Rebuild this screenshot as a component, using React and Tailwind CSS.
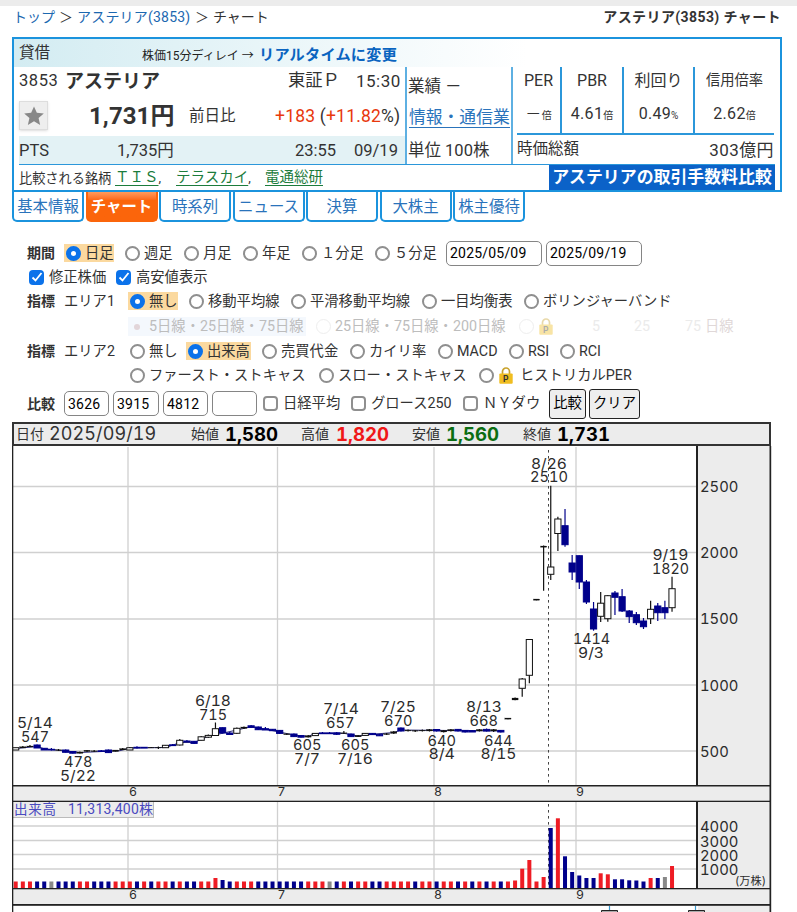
import React from "react";
import clsx from "clsx";

const TABS = ["基本情報", "チャート", "時系列", "ニュース", "決算", "大株主", "株主優待"];

/* ---- chart data: [index, top, bottom, high, low, type] ----
   w = up candle, b = down candle, k = flat */
const CANDLES = [
  [0, 747.7, 750, 747.7, 750, "w"], [1, 746.7, 748, 746, 748, "k"], [2, 746, 747, 745, 747, "k"],
  [3, 745, 748, 744.5, 748, "b"], [4, 748.3, 750, 748, 750, "b"], [5, 749.3, 750, 748, 750.5, "b"],
  [6, 749.7, 750.4, 749, 751, "k"], [7, 750, 752.3, 749.5, 752.5, "b"], [8, 751.5, 753.2, 751, 753.4, "b"],
  [9, 752, 753.4, 751.5, 753.5, "k"], [10, 750.2, 751.5, 750, 752, "k"], [11, 750.8, 751.5, 750, 752, "k"],
  [12, 750.8, 751.5, 750, 752, "b"], [13, 750, 752.6, 749.5, 753, "b"], [14, 750, 751.5, 750, 751.5, "k"],
  [15, 748.5, 750, 748, 750, "k"], [16, 747.7, 750, 747, 750, "w"], [17, 747.3, 748, 746.3, 748.5, "b"],
  [18, 747.3, 748, 747, 748, "b"], [19, 747.3, 748, 747, 748, "k"], [20, 747.3, 748, 746.5, 749, "k"],
  [21, 745.3, 747.7, 745, 747.7, "w"], [22, 744.8, 745.6, 744, 746, "b"], [23, 740.3, 745, 739, 745.5, "w"],
  [24, 741, 741.8, 740, 742, "b"], [25, 741.3, 743.4, 741, 744, "b"], [26, 736.8, 740.3, 736, 740.5, "w"],
  [27, 735.4, 737.2, 734.5, 738, "w"], [28, 728.7, 735.5, 722.5, 736, "w"], [29, 727.7, 733, 727.5, 733.5, "b"],
  [30, 733, 734.5, 732, 735, "b"], [31, 728.3, 733.3, 727.5, 734, "w"], [32, 727, 728.4, 726.5, 729, "k"],
  [33, 725.8, 727.4, 725, 728, "b"], [34, 727, 729.7, 726.5, 730, "b"], [35, 728.7, 730, 727, 730, "b"],
  [36, 729.3, 730.7, 729, 731, "b"], [37, 730.4, 733.4, 730, 734, "b"], [38, 733.7, 734.7, 733.5, 735, "k"],
  [39, 734, 736.6, 733.5, 737, "b"], [40, 735.6, 737.2, 735, 737.5, "b"], [41, 735.6, 737.2, 735, 737.5, "k"],
  [42, 733.4, 735.6, 733, 736, "w"], [43, 732.9, 733.7, 732, 734, "b"], [44, 732.9, 733.7, 732, 734, "b"],
  [45, 732.8, 734.3, 732, 735, "b"], [46, 732.8, 733.6, 731, 734, "k"], [47, 734, 736.6, 733.5, 737, "b"],
  [48, 735.4, 736.9, 735, 737, "k"], [49, 733.4, 735.4, 733, 736, "w"], [50, 733.4, 734.6, 733, 735, "b"],
  [51, 734.3, 735.8, 734, 736, "b"], [52, 733.7, 734.6, 733, 735, "k"], [53, 731.6, 733.4, 731, 734, "k"],
  [54, 728, 731, 727.5, 731.5, "b"], [55, 730.2, 731, 729.5, 731.5, "k"], [56, 730.4, 731.2, 730, 732, "k"],
  [57, 730.2, 731, 729.5, 731.5, "k"], [58, 729.4, 731, 729, 731.5, "k"], [59, 729.5, 731, 729, 731.5, "b"],
  [60, 730.4, 732, 730, 732.5, "k"], [61, 729.4, 731, 729, 731.5, "k"], [62, 729.4, 731, 729, 731.5, "b"],
  [63, 730.4, 732, 730, 732.5, "b"], [64, 730.6, 732, 730, 732, "b"], [65, 729.4, 731, 729, 731.5, "k"],
  [66, 729.4, 731, 728.5, 731.5, "b"], [67, 729.4, 731, 729, 732, "k"], [68, 730.4, 732, 730, 732.5, "b"],
  [69, 718, 719.2, 718, 719.2, "k"], [70, 698, 700, 697.5, 700.3, "k"], [71, 679, 688.3, 678, 696.7, "w"],
  [72, 639.5, 675.3, 639, 683.3, "w"], [73, 599, 600.3, 599, 600.3, "k"], [74, 546, 547.3, 545.5, 590.7, "k"],
  [75, 567, 574.3, 485.7, 580, "w"], [76, 519, 533.5, 516.7, 551, "w"], [77, 525.7, 544.7, 509, 546.7, "b"],
  [78, 563, 572, 555, 580, "b"], [79, 555.7, 582, 555.5, 589, "b"], [80, 582, 602, 580, 604, "b"],
  [81, 609, 629, 602, 630.7, "b"], [82, 603.2, 616.3, 592, 622, "w"], [83, 595.7, 618.7, 595, 621.7, "w"],
  [84, 593, 597.3, 591, 615, "b"], [85, 596.7, 611, 589, 612, "b"], [86, 611, 616.7, 610, 623, "b"],
  [87, 614.7, 622.7, 612, 625, "b"], [88, 621, 626.7, 618, 629, "b"], [89, 609.3, 618.7, 600.7, 624, "w"],
  [90, 606, 612.7, 603, 621, "b"], [91, 607.7, 612.7, 600.7, 619, "b"], [92, 588.7, 607.7, 576.7, 611.7, "w"],
];

const VOLUME_COLORS =
  "RRRBBGBBBRRBBBRRRBRBRRBRBBRRRBBRRRBBBBBBBRRRGBRBRRBBRRRRBRRBRRBRBRBRBRRRRRRBRBBBBBRRBBBBBRBGR";
const VOLUME_TOPS = {
  28: 878, 29: 880, 70: 880.5, 71: 868.7, 72: 860, 74: 877, 75: 828, 76: 818.3, 77: 856.3,
  78: 872, 79: 875.5, 80: 878, 81: 878, 82: 873.3, 83: 874.3, 84: 879.3, 85: 879.3, 86: 880.3,
  87: 880.5, 88: 881.5, 89: 878, 90: 878, 91: 877, 92: 866,
};
const VOLUME_FILL = { R: "#ee1c24", B: "#00008b", G: "#888888" };

// [text, x, baseline, width]
const LABELS = [
  ["5/14", 17, 728, 36], ["547", 21, 742, 28], ["478", 64, 767, 28.5], ["5/22", 60, 780.5, 36],
  ["6/18", 195, 706, 36], ["715", 199, 719.5, 28], ["605", 293, 750, 28.5], ["7/7", 294, 764, 26],
  ["7/14", 323, 714, 36], ["657", 326, 727.5, 28.5], ["605", 341, 750, 28.5], ["7/16", 337, 764, 36],
  ["7/25", 380, 711.5, 36], ["670", 384, 725.5, 28.5], ["640", 427.5, 745.5, 28.5], ["8/4", 428.5, 759, 26.5],
  ["8/13", 466, 711.5, 36], ["668", 469.5, 725.5, 28.5], ["644", 484, 745.5, 28.5], ["8/15", 480.5, 759, 36],
  ["8/26", 531, 468.5, 36], ["2510", 530, 482, 38], ["1414", 573, 644, 37], ["9/3", 578, 658, 26],
  ["9/19", 652.5, 560, 36], ["1820", 652, 573.5, 37],
];

const xOf = (i) => 15.7 + i * 7.134;

function Candle({ data }) {
  const [i, top, bottom, high, low, type] = data;
  const x = xOf(i);
  const color = type === "b" ? "#00008b" : "#111111";
  return (
    <g>
      <line x1={x} x2={x} y1={high} y2={low} stroke={color} strokeWidth="1.2" />
      <rect
        x={x - 3.1}
        y={top}
        width={6.2}
        height={bottom - top}
        fill={type === "w" ? "#fff" : color}
        stroke={color}
        strokeWidth={type === "k" ? 0.2 : 1}
      />
    </g>
  );
}

function ChartText({ x, y, w, size = 14.8, children }) {
  return (
    <text x={x} y={y} fontSize={size} textLength={w} lengthAdjust="spacingAndGlyphs" fill="#2b2b2b">
      {children}
    </text>
  );
}

function Chart() {
  return (
    <svg
      viewBox="0 446 797 466"
      className="block h-[466px] w-[797px] shrink-0 font-[Inter,'Noto_Sans_CJK_JP',sans-serif] tabular-nums"
    >
      {/* panels */}
      <rect x="698" y="446" width="72" height="466" fill="#ececec" />
      <rect x="13" y="786" width="757" height="15" fill="#ececec" />
      <rect x="13" y="889" width="757" height="15" fill="#ececec" />

      {/* grid */}
      <g stroke="#d0d0d0" strokeWidth="1.3">
        {[486.5, 552.5, 619, 685, 751, 826, 840.5, 854.5, 869].map((y) => (
          <line key={y} x1="13" x2="696" y1={y} y2={y} />
        ))}
        {[128, 277.5, 434, 576].map((x) => (
          <React.Fragment key={x}>
            <line x1={x} x2={x} y1="447" y2="785" />
            <line x1={x} x2={x} y1="802" y2="888" />
          </React.Fragment>
        ))}
      </g>
      <path d="M548.5 450V785M548.5 804V888" stroke="#444" strokeWidth="1" strokeDasharray="2.6 3.4" />

      {/* prices */}
      <path
        d="M16 748.5 37 746.5 45 749 66 751 80 752.5 120 750.7 130 748 166 747.5 180 742.5 194 742.5 208 736.5 251 726.8 266 729.3 294 735 308 736.5 315 733.5 344 733.3 358 736 372 734.3 394 732.5 401 730 501 731"
        fill="none"
        stroke="#15156e"
        strokeWidth=".9"
      />
      {CANDLES.map((c) => (
        <Candle key={c[0]} data={c} />
      ))}
      {LABELS.map(([t, x, y, w]) => (
        <ChartText key={t + x} x={x} y={y} w={w}>
          {t}
        </ChartText>
      ))}

      {/* volume */}
      {VOLUME_COLORS.split("").map((c, i) => {
        const top = VOLUME_TOPS[i] || 881.5;
        return <rect key={i} x={xOf(i) - 2} y={top} width="4" height={888 - top} fill={VOLUME_FILL[c]} />;
      })}
      <rect x="12.5" y="801.5" width="141" height="16" fill="#ececec" stroke="#bbb" />
      <g className="font-[Roboto,'Noto_Sans_CJK_JP',sans-serif]" fill="#4a4ac0">
        <text x="14" y="814" fontSize="13.5" textLength="42">出来高</text>
        <text x="68" y="814" fontSize="14" textLength="85">11,313,400株</text>
      </g>

      {/* frame */}
      <g fill="#222">
        <rect x="12" y="446" width="1.3" height="466" />
        <rect x="696" y="446" width="2" height="340" />
        <rect x="696" y="802" width="2" height="86" />
        <rect x="769.5" y="446" width="1.7" height="466" />
        <rect x="12" y="785" width="759" height="1.5" />
        <rect x="12" y="800.7" width="759" height="1.3" />
        <rect x="12" y="888" width="759" height="1.3" />
        <rect x="12" y="904" width="759" height="1.8" />
      </g>

      {/* axis */}
      {[["2500", 492], ["2000", 558], ["1500", 624], ["1000", 690.5], ["500", 757]].map(([t, y]) => (
        <ChartText key={t} x={700} y={y} w={t.length * 9.6}>
          {t}
        </ChartText>
      ))}
      {[["4000", 832], ["3000", 847], ["2000", 861], ["1000", 875]].map(([t, y]) => (
        <ChartText key={t} x={700} y={y} w={38.5}>
          {t}
        </ChartText>
      ))}
      <ChartText x={735} y={885} w={31} size={11.5}>
        (万株)
      </ChartText>
      {[["6", 129], ["7", 277.5], ["8", 434], ["9", 576]].map(([t, x]) => (
        <React.Fragment key={t}>
          <ChartText x={x} y={796} w={8} size={12}>
            {t}
          </ChartText>
          <ChartText x={x} y={899} w={8} size={12}>
            {t}
          </ChartText>
        </React.Fragment>
      ))}

      {/* range handles */}
      <path d="M609.5 906V911M695.5 906V911" stroke="#3a9ad0" strokeWidth="1.2" />
      <path d="M601.5 912V910.5H617.5V912M688.5 912V910.5H704.5V912" fill="#aaa" stroke="#222" />
    </svg>
  );
}

function Radio({ on, faint, children, className }) {
  return (
    <span className={clsx("flex h-[18px] shrink-0 items-center whitespace-nowrap", className)}>
      <span
        className={clsx(
          "ml-[1.5px] mr-[4.5px] size-[15px] shrink-0 rounded-full bg-white",
          on ? "border-[5px] border-[#0b72ea]" : faint ? "border border-[#eee]" : "border-2 border-[#8f8f8f]"
        )}
      />
      {children}
    </span>
  );
}

function Check({ on, children, className }) {
  return (
    <span className={clsx("flex shrink-0 items-center whitespace-nowrap", className)}>
      <span
        className={clsx(
          "mr-[5px] flex size-[15px] shrink-0 items-center justify-center rounded-[4px]",
          on ? "bg-[#0b72ea]" : "border-2 border-[#8f8f8f]"
        )}
      >
        {on && (
          <svg viewBox="0 0 14 14" className="size-[14px]">
            <path d="M2.5 7.5 5.5 10.5 11.5 3" fill="none" stroke="#fff" strokeWidth="1.8" />
          </svg>
        )}
      </span>
      {children}
    </span>
  );
}

function Lock({ className }) {
  return (
    <svg viewBox="0 0 14 17" className={clsx("h-[17px] w-[14px] shrink-0", className)}>
      <path d="M3.5 8V4.5a3.5 3.5 0 0 1 7 0V8" fill="none" stroke="#c9a22c" strokeWidth="1.7" />
      <rect x=".3" y="6.5" width="13.4" height="10.3" rx="1" fill="#f0bd20" />
      <text x="4" y="14.7" fontSize="8.5" fontWeight="700" fill="#333" fontFamily="Roboto">P</text>
    </svg>
  );
}

function Field({ children, className }) {
  return (
    <span
      className={clsx(
        "flex h-[25px] shrink-0 items-center rounded-[5px] border border-[#858585] pl-[3px] text-[14px] tracking-[0.2px] text-black",
        className
      )}
    >
      {children}
    </span>
  );
}

function Quote({ head, value, unit, className, small }) {
  return (
    <div className={clsx("flex h-[66px] flex-col items-center", className)}>
      <div className={clsx("flex h-[27px] items-center whitespace-nowrap", small ? "text-[14.3px]" : "text-[16px]")}>{head}</div>
      <div className="mt-[8px] flex h-[24px] items-baseline whitespace-nowrap text-[16px] leading-[24px] tracking-[0.3px]">
        {value}
        <span className="text-[10px] tracking-normal">{unit}</span>
      </div>
    </div>
  );
}

function Header() {
  return (
    <section className="ml-[12px] mt-[9px] flex h-[155px] w-[770px] shrink-0 flex-col border-2 border-[#1b93dd] leading-none">
      <div className="flex h-[28px] shrink-0 bg-linear-to-r from-[#d3ecf2] to-white to-[67%] pl-[5px]">
        <span className="mt-[7px] w-[123px] text-[15.5px]">貸借</span>
        <span className="mt-[11px] w-[117px] whitespace-nowrap text-[12px] text-[#222]">株価15分ディレイ →</span>
        <b className="mt-[9px] whitespace-nowrap text-[15.2px] tracking-[0.2px] text-[#0a64c0]">リアルタイムに変更</b>
      </div>
      <div className="flex h-[97px] shrink-0">
        <div className="flex w-[391px] shrink-0 flex-col pl-[5px]">
          <div className="flex h-[28px] items-center">
            <span className="w-[46px] text-[16.5px] tracking-[0.6px]">3853</span>
            <b className="w-[223px] whitespace-nowrap text-[19px]">アステリア</b>
            <span className="w-[68px] whitespace-nowrap text-[17.3px]">東証Ｐ</span>
            <span className="whitespace-nowrap text-[17px] tracking-[0.5px]">15:30</span>
          </div>
          <div className="flex h-[41px] items-center">
            <span className="mr-[41px] flex size-[29px] shrink-0 items-center justify-center border border-[#ddd] bg-[#eee] shadow-sm">
              <svg viewBox="0 0 24 24" className="size-[22px]">
                <path d="m12 1.5 3.1 7 7.6.7-5.7 5.1 1.7 7.5-6.7-4-6.7 4L7 14.3 1.3 9.2l7.6-.7z" fill="#888" />
              </svg>
            </span>
            <b className="w-[100px] shrink-0 whitespace-nowrap text-[24px] tracking-[0.1px]">1,731円</b>
            <span className="w-[86px] shrink-0 whitespace-nowrap pt-[3px] text-[15.5px]">前日比</span>
            <span className="whitespace-nowrap pt-[2px] text-[17.5px] tracking-[0.2px]">
              <span className="text-[#e8380d]">+183</span> (<span className="text-[#e8380d]">+11.82</span>%)
            </span>
          </div>
          <div className="flex h-[28px] items-center bg-[#e3f2f5] pt-[2px] text-[16.5px]">
            <span className="w-[98px]">PTS</span>
            <span className="w-[178px] whitespace-nowrap">1,735円</span>
            <span className="w-[59px]">23:55</span>
            <span>09/19</span>
          </div>
        </div>
        <div className="flex w-[106px] shrink-0 flex-col whitespace-nowrap border-l-2 border-[#5eb0e2] pl-[1px] text-[16.5px]">
          <span className="mt-[12px] h-[30px]">業績 －</span>
          <span className="h-[34px] pl-px">
            <span className="border-b border-[#2a73bb] text-[16.8px] text-[#2a73bb]">情報・通信業</span>
          </span>
          <span>単位 100株</span>
        </div>
        <div className="flex w-[263px] flex-col border-l-2 border-[#5eb0e2] pl-[4px]">
          <div className="flex h-[68px] border-b-2 border-[#2b97da]">
            <Quote head="PER" value="－" unit="倍" className="w-[43px]" />
            <Quote head="PBR" value="4.61" unit="倍" className="w-[62px] border-l-2 border-[#2b97da]" />
            <Quote head="利回り" value="0.49" unit="%" className="w-[71px] border-l-2 border-[#2b97da]" />
            <Quote small head="信用倍率" value="2.62" unit="倍" className="w-[81px] border-l-2 border-[#2b97da]" />
          </div>
          <div className="flex h-[29px] items-center justify-between pt-px">
            <span className="text-[15.5px]">時価総額</span>
            <span className="text-[17px] tracking-[0.4px]">303億円</span>
          </div>
        </div>
      </div>
      <div className="ml-[5px] flex h-[26px] w-[756px] items-center justify-between border-t border-[#2b97da]">
        <span className="flex items-center whitespace-nowrap pt-[2px] text-[13.2px]">
          <span className="w-[96px]">比較される銘柄</span>
          <span className="w-[61px]"><u className="text-[14.5px] text-[#1c7c3c] underline-offset-[3px]">ＴＩＳ</u>,</span>
          <span className="w-[89px]"><u className="text-[14.5px] text-[#1c7c3c] underline-offset-[3px]">テラスカイ</u>,</span>
          <u className="text-[14.5px] text-[#1c7c3c] underline-offset-[3px]">電通総研</u>
        </span>
        <b className="flex h-full w-[226px] items-center justify-center whitespace-nowrap bg-[#0b62c8] text-[16.9px] text-white">
          アステリアの取引手数料比較
        </b>
      </div>
    </section>
  );
}

function Controls() {
  return (
    <form className="flex shrink-0 flex-col pl-[27px] pt-[18px] text-[14.3px] leading-none">
      <div className="flex h-[26px] items-center">
        <b className="w-[37px] text-[14px]">期間</b>
        <Radio on className="mr-[9px] w-[50px] bg-[#fbd99f]">日足</Radio>
        <Radio className="w-[59px]">週足</Radio>
        <Radio className="w-[59px]">月足</Radio>
        <Radio className="w-[59px]">年足</Radio>
        <Radio className="w-[73px]">１分足</Radio>
        <Radio className="w-[73px]">５分足</Radio>
        <Field className="mr-[4px] w-[96px]">2025/05/09</Field>
        <Field className="w-[96px]">2025/09/19</Field>
      </div>
      <div className="flex h-[22px] items-center pl-[2px]">
        <Check on className="w-[87px]">修正株価</Check>
        <Check on>高安値表示</Check>
      </div>
      <div className="flex h-[26px] items-center">
        <b className="w-[37px] text-[14px]">指標</b>
        <span className="w-[64px]">エリア1</span>
        <Radio on className="mr-[9px] w-[50px] bg-[#fbd99f]">無し</Radio>
        <Radio className="w-[102px]">移動平均線</Radio>
        <Radio className="w-[131px]">平滑移動平均線</Radio>
        <Radio className="w-[102px]">一目均衡表</Radio>
        <Radio>ボリンジャーバンド</Radio>
      </div>
      <div className="flex h-[25px] items-center text-[#bdbdbd]">
        <span className="ml-[101px] flex h-[19px] w-[178px] items-center whitespace-nowrap bg-[#f4f8fd]">
          <i className="ml-[6px] mr-[9px] size-[6px] rounded-full bg-[#e2d5d9]" />
          5日線・25日線・75日線
        </span>
        <Radio faint className="ml-[8px] w-[203px]">25日線・75日線・200日線</Radio>
        <Radio faint className="w-[22px]" />
        <Lock className="opacity-40" />
        <span className="w-[47px] text-right text-[#ebebeb]">5</span>
        <span className="w-[50px] text-right text-[#ebebeb]">25</span>
        <span className="mr-[4px] w-[51px] text-right text-[#ebebeb]">75</span>
        <span className="text-[#e0d8d8]">日線</span>
      </div>
      <div className="flex h-[24px] items-center">
        <b className="w-[37px] text-[14px]">指標</b>
        <span className="w-[64px]">エリア2</span>
        <Radio className="w-[58px]">無し</Radio>
        <Radio on className="mr-[9px] w-[65px] bg-[#fbd99f]">出来高</Radio>
        <Radio className="w-[88px]">売買代金</Radio>
        <Radio className="w-[88px]">カイリ率</Radio>
        <Radio className="w-[71px]">MACD</Radio>
        <Radio className="w-[51px]">RSI</Radio>
        <Radio>RCI</Radio>
      </div>
      <div className="flex h-[24px] items-center pl-[101px]">
        <Radio className="w-[189px]">ファースト・ストキャス</Radio>
        <Radio className="w-[160px]">スロー・ストキャス</Radio>
        <Radio className="w-[22px]" />
        <Lock className="mr-[7px]" />
        ヒストリカルPER
      </div>
      <div className="flex h-[33px] items-center">
        <b className="w-[37px] text-[14px]">比較</b>
        <Field className="mr-[4px] w-[45px]">3626</Field>
        <Field className="mr-[4px] w-[46px]">3915</Field>
        <Field className="mr-[4px] w-[45px]">4812</Field>
        <Field className="mr-[6px] w-[45px]" />
        <Check className="w-[88px]">日経平均</Check>
        <Check className="w-[112px]">グロース250</Check>
        <Check className="w-[86px]">ＮＹダウ</Check>
        <button type="button" className="mr-[3px] h-[30px] w-[37px] shrink-0 whitespace-nowrap rounded-[3px] border border-[#222] bg-[#eee] text-black">
          比較
        </button>
        <button type="button" className="h-[30px] w-[51px] shrink-0 whitespace-nowrap rounded-[3px] border border-[#222] bg-[#eee] text-black">
          クリア
        </button>
      </div>
    </form>
  );
}

function PriceBar() {
  const num = "text-[18.6px] font-bold font-[Inter,sans-serif]";
  return (
    <div className="ml-[12px] mt-[2px] flex h-[24px] w-[759px] shrink-0 items-center whitespace-nowrap border-2 border-[#333] bg-[#ececec] pl-[2px] text-[14px] leading-none">
      <span className="w-[33px]">日付</span>
      <span className="w-[142px] font-[Inter,sans-serif] text-[18px] tracking-[0.1px] tabular-nums">2025/09/19</span>
      <span className="w-[34px]">始値</span>
      <span className={clsx(num, "w-[76px] tabular-nums text-black")}>1,580</span>
      <span className="w-[35px]">高値</span>
      <span className={clsx(num, "w-[76px] tabular-nums text-[#f01818]")}>1,820</span>
      <span className="w-[34px]">安値</span>
      <span className={clsx(num, "w-[77px] tabular-nums text-[#0b6e12]")}>1,560</span>
      <span className="w-[34px]">終値</span>
      <span className={clsx(num, "tabular-nums text-black")}>1,731</span>
    </div>
  );
}

export default function App() {
  return (
    <main className="flex h-[912px] w-[797px] flex-col overflow-hidden bg-white font-[Roboto,'Noto_Sans_CJK_JP',sans-serif] text-[#333]">
      <div className="h-[6px] shrink-0 bg-[#ececec]" />
      <nav className="flex h-[22px] shrink-0 items-center justify-between whitespace-nowrap pl-[13px] pr-[16px] text-[14px] leading-none">
        <span className="flex">
          <span className="w-[46px] text-[#1c68b0]">トップ</span>
          <span className="w-[18px]">＞</span>
          <span className="w-[118px] tracking-[0.2px] text-[#1c68b0]">アステリア(3853)</span>
          <span className="w-[18px]">＞</span>
          <span>チャート</span>
        </span>
        <b className="tracking-[0.4px]">アステリア(3853) チャート</b>
      </nav>
      <Header />
      <div className="ml-[12px] flex shrink-0 gap-[1.5px]">
        {TABS.map((t, i) => (
          <div
            key={t}
            className={clsx(
              "flex h-[30px] w-[72px] items-center justify-center whitespace-nowrap rounded-b-[5px] border-2 border-t-0 pt-[3px] text-[15.4px] leading-none",
              i === 1
                ? "border-[#fb650b] bg-linear-to-b from-[#ff9a5a] to-[#fb650b] to-30% font-bold text-white"
                : "border-[#1b93dd] text-[#2a73bb]"
            )}
          >
            {t}
          </div>
        ))}
      </div>
      <Controls />
      <PriceBar />
      <Chart />
    </main>
  );
}
